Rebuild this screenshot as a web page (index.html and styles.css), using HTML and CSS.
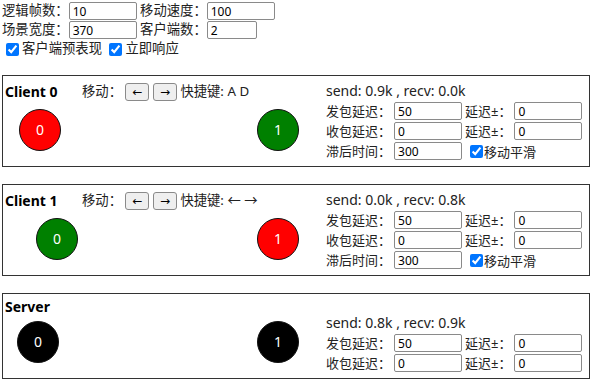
FILE: index.html
```html
<!DOCTYPE html>
<html lang="zh">
 <head>
   <meta charset="UTF-8">
   <meta name="viewport" content="width=device-width, initial-scale=1.0">
   <title>同步测试</title>
   <link rel="stylesheet" href="styles.css">
 </head>
 <body>
  <div class="settings">
    <div class="line">逻辑帧数：<input class="field" value="10"> 移动速度：<input class="field" value="100"></div>
    <div class="line">场景宽度：<input class="field" value="370"> 客户端数：<input class="field small" value="2"></div>
    <div class="line"><label><input type="checkbox" checked>客户端预表现</label> <label><input type="checkbox" checked>立即响应</label></div>
  </div>

  <div class="panel">
    <div class="view">
      <div class="head">
        <b class="name">Client 0</b>
        <span class="ctrl">移动： <button class="move">←</button> <button class="move">→</button> 快捷键: A D</span>
      </div>
      <div class="scene">
        <div class="ball red" style="left: 14px;">0</div>
        <div class="ball green" style="left: 252px;">1</div>
      </div>
    </div>
    <div class="net">
      <div class="stat">send: 0.9k , recv: 0.0k</div>
      <div class="row"><span class="lbl">发包延迟：</span><input class="field" value="50"><span class="lbl">延迟±：</span><input class="field" value="0"></div>
      <div class="row"><span class="lbl">收包延迟：</span><input class="field" value="0"><span class="lbl">延迟±：</span><input class="field" value="0"></div>
      <div class="row"><span class="lbl">滞后时间：</span><input class="field" value="300"><label class="smooth"><input type="checkbox" checked>移动平滑</label></div>
    </div>
  </div>

  <div class="panel">
    <div class="view">
      <div class="head">
        <b class="name">Client 1</b>
        <span class="ctrl">移动： <button class="move">←</button> <button class="move">→</button> 快捷键: ← →</span>
      </div>
      <div class="scene">
        <div class="ball green" style="left: 31px;">0</div>
        <div class="ball red" style="left: 252px;">1</div>
      </div>
    </div>
    <div class="net">
      <div class="stat">send: 0.0k , recv: 0.8k</div>
      <div class="row"><span class="lbl">发包延迟：</span><input class="field" value="50"><span class="lbl">延迟±：</span><input class="field" value="0"></div>
      <div class="row"><span class="lbl">收包延迟：</span><input class="field" value="0"><span class="lbl">延迟±：</span><input class="field" value="0"></div>
      <div class="row"><span class="lbl">滞后时间：</span><input class="field" value="300"><label class="smooth"><input type="checkbox" checked>移动平滑</label></div>
    </div>
  </div>

  <div class="panel">
    <div class="view">
      <div class="head">
        <b class="name">Server</b>
      </div>
      <div class="scene">
        <div class="ball black" style="left: 12px;">0</div>
        <div class="ball black" style="left: 252px;">1</div>
      </div>
    </div>
    <div class="net">
      <div class="stat">send: 0.8k , recv: 0.9k</div>
      <div class="row"><span class="lbl">发包延迟：</span><input class="field" value="50"><span class="lbl">延迟±：</span><input class="field" value="0"></div>
      <div class="row"><span class="lbl">收包延迟：</span><input class="field" value="0"><span class="lbl">延迟±：</span><input class="field" value="0"></div>
    </div>
  </div>
 </body>
</html>
```

FILE: styles.css
```css
body {
    font-family: "Noto Sans", "Noto Sans CJK SC", sans-serif;
    font-size: 13px;
    color: #222;
    margin: 0;
    padding: 1px 2px;
    background-color: #ffffff;
}

/* top settings */
.settings {
    font-size: 13.33px;
}

.line {
    height: 19px;
    line-height: 19px;
    white-space: nowrap;
}

.field {
    box-sizing: border-box;
    width: 68px;
    height: 18px;
    padding: 0 3px;
    border: 1px solid #8a8a8a;
    border-radius: 2px;
    font-family: inherit;
    font-size: 12px;
    color: #000;
    vertical-align: middle;
}

.field.small {
    width: 50px;
}

input[type="checkbox"] {
    width: 13px;
    height: 13px;
    margin: 3px 3px 3px 4px;
    vertical-align: middle;
}

/* one box per client / server */
.panel {
    box-sizing: border-box;
    width: 588px;
    margin-top: 17px;
    border: 1px solid #333;
    padding: 4px 2px 5px 2px;
    display: flex;
    align-items: flex-start;
}

.view {
    flex: 0 0 321px;
    width: 321px;
}

.head {
    display: flex;
    align-items: center;
    min-height: 18px;
    line-height: 18px;
    white-space: nowrap;
}

.name {
    font-size: 14px;
    font-weight: bold;
    color: #000;
    width: 77px;
}

.ctrl {
    font-size: 13.33px;
}

.move {
    box-sizing: border-box;
    width: 24px;
    height: 18px;
    margin: 3px 0;
    padding: 0;
    border: 1px solid #8a8a8a;
    border-radius: 3px;
    background-color: #efefef;
    font-family: "DejaVu Sans", sans-serif;
    font-size: 12px;
    color: #000;
    vertical-align: middle;
}

.scene {
    position: relative;
    height: 57px;
}

.ball {
    position: absolute;
    top: 5px;
    width: 40px;
    height: 40px;
    border: 1px solid #111;
    border-radius: 50%;
    color: #fff;
    text-align: center;
    line-height: 40px;
    font-size: 14px;
}

.red { background-color: #ff0000; }
.green { background-color: #008000; }
.black { background-color: #000000; }

/* network settings */
.net {
    flex: 1 1 auto;
    min-width: 0;
    align-self: flex-end;
}

.stat {
    height: 20px;
    line-height: 20px;
    font-size: 14px;
    white-space: nowrap;
}

.row {
    display: flex;
    align-items: center;
    gap: 3px;
    height: 20px;
    white-space: nowrap;
}

.lbl {
    line-height: 20px;
}

.smooth {
    display: flex;
    align-items: center;
}

.smooth input[type="checkbox"] {
    margin: 0 1px 0 5px;
}
```
